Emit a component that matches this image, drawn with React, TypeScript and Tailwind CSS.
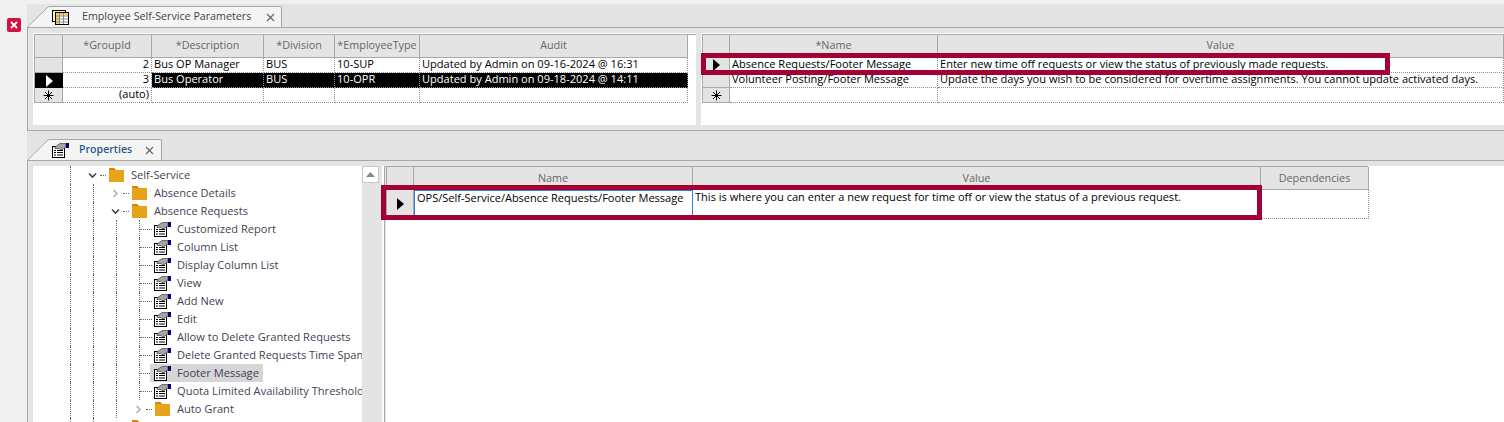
import React from "react";

const font = { fontFamily: '"Open Sans", "Noto Sans", sans-serif' };

function Arrow() {
  return (
    <svg width="9" height="12" viewBox="0 0 9 12" className="shrink-0">
      <path d="M1 0 L8 6 L1 12 Z" fill="currentColor" />
    </svg>
  );
}

function Star() {
  return (
    <svg width="11" height="11" viewBox="0 0 11 11">
      <path d="M5.5 0.5V10.5M0.5 5.5H10.5M2 2L9 9M9 2L2 9" stroke="#000" strokeWidth="1" fill="none" />
    </svg>
  );
}

function PropIcon() {
  return (
    <svg width="17" height="15" viewBox="0 0 17 15" className="shrink-0">
      <rect x="0.5" y="3.5" width="12" height="11" fill="#fff" stroke="#000" />
      <path d="M2 7.5H4M5 7.5H11M2 9.5H4M5 9.5H11M2 12H4M5 12H11" stroke="#000" />
      <path d="M3 4L8 0.5H14V4L10 6.5H8L7 5.5H3Z" fill="#a4a4a4" stroke="#444" strokeWidth="0.7" />
      <rect x="14" y="0" width="3" height="5" fill="#000080" />
    </svg>
  );
}

function GridIcon() {
  return (
    <svg width="17" height="15" viewBox="0 0 17 15">
      <rect x="0.5" y="0.5" width="13" height="11" fill="#fff3b0" stroke="#000" />
      <rect x="3.5" y="2.5" width="13" height="12" fill="#fff" stroke="#000" />
      <rect x="4" y="3" width="12" height="2.5" fill="#f2d25c" />
      <rect x="4" y="3" width="3" height="11" fill="#f2d25c" />
      <path d="M7.5 3V14M11.5 3V14M4 6H16M4 9H16M4 12H16" stroke="#8a8a8a" />
    </svg>
  );
}

function Folder() {
  return (
    <svg width="15" height="14" viewBox="0 0 15 14" className="shrink-0">
      <path d="M0 1.5Q0 0 1 0H5L7 2H15V14H0Z" fill="#e6a519" />
      <path d="M0 2V1Q0 0 1 0H5L7 2Z" fill="#e07b10" />
    </svg>
  );
}

function Chevron({ open }: { open: boolean }) {
  return (
    <svg width="9" height="9" viewBox="0 0 9 9" className="shrink-0">
      {open ? (
        <path d="M1 2.5L4.5 6L8 2.5" stroke="#444" strokeWidth="1.6" fill="none" />
      ) : (
        <path d="M2.5 1L6 4.5L2.5 8" stroke="#b0b0b0" strokeWidth="1.6" fill="none" />
      )}
    </svg>
  );
}

function Tab({
  label,
  active,
  icon,
  textGap,
  closeGap,
  right,
}: {
  label: string;
  active?: boolean;
  icon: React.ReactNode;
  textGap: string;
  closeGap: string;
  right: string;
}) {
  return (
    <div className="ml-px flex h-[21px] items-stretch">
      <svg width="21" height="21" viewBox="0 0 21 21" className="shrink-0">
        <path d="M0 21V20L20 1H21V21Z" fill="#f4f4f4" />
        <path d="M0.5 21V20L20 1H21" stroke="#a8a8a8" fill="none" />
      </svg>
      <div className={`flex flex-1 items-center rounded-tr-[2px] border-t border-r border-[#a8a8a8] bg-[#f4f4f4] ${right}`}>
        <div className={`ml-[3px] flex w-[17px] shrink-0 items-center ${textGap}`}>{icon}</div>
        <span className={`whitespace-nowrap pb-px ${active ? "text-[10.6px] font-semibold text-[#2b5a8c]" : "text-[10.7px] text-[#444]"}`}>{label}</span>
        <span className={closeGap}>
          <svg width="9" height="9" viewBox="0 0 9 9" className="block">
            <path d="M1 1L8 8M8 1L1 8" stroke="#666" strokeWidth="1.2" />
          </svg>
        </span>
      </div>
    </div>
  );
}

const hdrBase = "flex items-center justify-center border-r border-b border-[#a9a9a9] bg-[#e4e4e4] text-[10.8px] text-[#666] whitespace-nowrap overflow-hidden";
const hdr = `${hdrBase} pb-px`;
const cell = "flex items-start border-r border-b border-dotted border-[#8f8f8f] px-[2px] text-[11.05px] leading-[11px] text-black whitespace-nowrap";
const rowHead = "flex items-center justify-center border-r border-b border-[#a9a9a9] bg-[#e4e4e4]";

function Grid1() {
  const cols = "grid-cols-[28px_89px_112px_71px_85px_268px]";
  const rows: [React.ReactNode, string, string, string, string, string, boolean][] = [
    ["", "2", "Bus OP Manager", "BUS", "10-SUP", "Updated by Admin on 09-16-2024 @ 16:31", false],
    [<Arrow />, "3", "Bus Operator", "BUS", "10-OPR", "Updated by Admin on 09-18-2024 @ 14:11", true],
    [<Star />, "(auto)", "", "", "", "", false],
  ];
  return (
    <div className="h-[92px] w-[663px] bg-white pl-px pt-px">
      <div className={`grid ${cols} grid-rows-[23px_15px_15px_15px] border-l border-t border-[#a9a9a9]`}>
        <div className={hdr} />
        {["*GroupId", "*Description", "*Division", "*EmployeeType", "Audit"].map((h) => (
          <div key={h} className={hdr}>{h}</div>
        ))}
        {rows.map((r, i) => (
          <React.Fragment key={i}>
            <div className={r[6] ? "flex items-center justify-center bg-black text-white" : rowHead}>{r[0]}</div>
            <div className={`${cell} justify-end`}>{r[1]}</div>
            {[r[2], r[3], r[4], r[5]].map((t, j) => (
              <div key={j} className={`${cell} ${r[6] ? "bg-black text-white" : ""}`}>{t}</div>
            ))}
          </React.Fragment>
        ))}
      </div>
    </div>
  );
}

function Grid2() {
  const cols = "grid-cols-[27px_208px_566px]";
  const rows: [React.ReactNode, string, string][] = [
    [<Arrow />, "Absence Requests/Footer Message", "Enter new time off requests or view the status of previously made requests."],
    ["", "Volunteer Posting/Footer Message", "Update the days you wish to be considered for overtime assignments. You cannot update activated days."],
    [<Star />, "", ""],
  ];
  return (
    <div className="h-[92px] min-w-0 flex-1 bg-white pl-px pt-px">
      <div className={`grid ${cols} grid-rows-[23px_15px_15px_15px] border-l border-t border-[#a9a9a9]`}>
        <div className={hdr} />
        <div className={hdr}>*Name</div>
        <div className={hdr}>Value</div>
        {rows.map((r, i) => (
          <React.Fragment key={i}>
            <div className={rowHead}>{r[0]}</div>
            <div className={cell}>{r[1]}</div>
            <div className={cell}>{r[2]}</div>
          </React.Fragment>
        ))}
      </div>
    </div>
  );
}

type Node = { g: number; kind: "folder" | "leaf"; open?: boolean; label: string; sel?: boolean };
const nodes: Node[] = [
  { g: 1, kind: "folder", open: true, label: "Self-Service" },
  { g: 2, kind: "folder", open: false, label: "Absence Details" },
  { g: 2, kind: "folder", open: true, label: "Absence Requests" },
  { g: 3, kind: "leaf", label: "Customized Report" },
  { g: 3, kind: "leaf", label: "Column List" },
  { g: 3, kind: "leaf", label: "Display Column List" },
  { g: 3, kind: "leaf", label: "View" },
  { g: 3, kind: "leaf", label: "Add New" },
  { g: 3, kind: "leaf", label: "Edit" },
  { g: 3, kind: "leaf", label: "Allow to Delete Granted Requests" },
  { g: 3, kind: "leaf", label: "Delete Granted Requests Time Span" },
  { g: 3, kind: "leaf", label: "Footer Message", sel: true },
  { g: 3, kind: "leaf", label: "Quota Limited Availability Threshold" },
  { g: 3, kind: "folder", open: false, label: "Auto Grant" },
  { g: 2, kind: "folder", open: false, label: "" },
];

function Guide() {
  return <div className="h-full w-[23px] shrink-0 border-l border-dotted border-[#666]" />;
}

function TreeRow({ n }: { n: Node }) {
  const guides = [0, 1, 2].filter((i) => i < n.g).map((i) => <Guide key={i} />);
  return (
    <div className="flex h-[18px] items-center pl-[37px]">
      {guides}
      {n.kind === "leaf" ? (
        <>
          <div className="flex h-full w-[15px] shrink-0 items-center border-l border-dotted border-[#666]">
            <div className="w-[12px] border-t border-dotted border-[#666]" />
          </div>
          <div className={`-ml-[4px] flex h-[18px] items-center pl-[4px] pr-[4px] ${n.sel ? "bg-[#d6d6d6]" : ""}`}>
            <PropIcon />
            <span className="ml-[6px] text-[11.1px] whitespace-nowrap text-[#3f3f55]">{n.label}</span>
          </div>
        </>
      ) : (
        <>
          <div className="-ml-[5px] flex w-[9px] shrink-0 justify-center">
            <Chevron open={!!n.open} />
          </div>
          <div className="ml-[3px] w-[6px] shrink-0 border-t border-dotted border-[#666]" />
          <div className="ml-[3px] flex items-center">
            <Folder />
            <span className="ml-[7px] text-[11.1px] whitespace-nowrap text-[#3f3f55]">{n.label}</span>
          </div>
        </>
      )}
    </div>
  );
}

function Tree() {
  return (
    <div className="relative h-full w-[351px] shrink-0 overflow-hidden bg-white">
      <div className="w-[329px] overflow-hidden">
        {nodes.map((n, i) => (
          <TreeRow key={i} n={n} />
        ))}
      </div>
      <div className="absolute right-[2px] top-0 h-full w-[20px] bg-[#e4e4e4]">
        <div className="flex h-[17px] w-[17px] items-center justify-center border border-[#c8c8c8] bg-white">
          <svg width="9" height="5" viewBox="0 0 9 5">
            <path d="M0 5L4.5 0L9 5Z" fill="#8a8a8a" />
          </svg>
        </div>
      </div>
    </div>
  );
}

function Grid3() {
  const top = "border-r border-b border-dotted border-[#8f8f8f] px-[2px] text-[11.05px] leading-[14px] text-black whitespace-nowrap";
  return (
    <div className="h-full min-w-0 flex-1 bg-white">
      <div className="grid w-[982px] grid-cols-[27px_279px_568px_108px] grid-rows-[23px_29px] border-t border-l border-[#a9a9a9]">
        <div className={hdrBase} />
        <div className={hdrBase}>Name</div>
        <div className={hdrBase}>Value</div>
        <div className={hdrBase}>Dependencies</div>
        <div className={rowHead}><Arrow /></div>
        <div className="border border-[#2f7fd0] px-[2px] text-[11px] leading-[14px] text-black whitespace-nowrap">OPS/Self-Service/Absence Requests/Footer Message</div>
        <div className={top}>This is where you can enter a new request for time off or view the status of a previous request.</div>
        <div className={top} />
      </div>
    </div>
  );
}

export default function App() {
  return (
    <div className="relative flex h-[422px] w-[1504px] overflow-hidden bg-[#f0f0f0]" style={font}>
      <div className="flex w-[27px] shrink-0 justify-start pl-[7px] pt-[18px]">
        <div className="flex h-[14px] w-[14px] items-center justify-center rounded-[2px] bg-[#d4123f]">
          <svg width="8" height="8" viewBox="0 0 8 8">
            <path d="M1 1L7 7M7 1L1 7" stroke="#fff" strokeWidth="1.8" />
          </svg>
        </div>
      </div>
      <div className="min-w-0 flex-1 pt-[4px]">
        <div className="flex h-[23px] items-end bg-[#e4e4e4]">
          <Tab label="Employee Self-Service Parameters" icon={<GridIcon />} textGap="mr-[13px]" closeGap="ml-[15px]" right="pr-[6px]" />
        </div>
        <div className="flex h-[104px] gap-[5px] border-y border-l border-[#a8a8a8] bg-[#e4e4e4] pl-[5px] pt-[5px]">
          <Grid1 />
          <Grid2 />
        </div>
        <div className="flex h-[29px] items-end bg-[#e4e4e4]">
          <Tab label="Properties" active icon={<PropIcon />} textGap="mr-[10px]" closeGap="ml-[13px]" right="pr-[7px]" />
        </div>
        <div className="flex h-[262px] border-t border-l border-[#a8a8a8] bg-[#e4e4e4] pl-[5px] pt-[5px]">
          <Tree />
          <div className="w-[2px] shrink-0 border-l border-[#a8a8a8] bg-[#e4e4e4]" />
          <Grid3 />
        </div>
      </div>

      <div className="absolute left-[701px] top-[53px] h-[22px] w-[689px] border-[5px] border-[#a50034]" />
      <div className="absolute left-[381px] top-[185px] h-[35px] w-[881px] border-[5px] border-[#a50034]" />
    </div>
  );
}
